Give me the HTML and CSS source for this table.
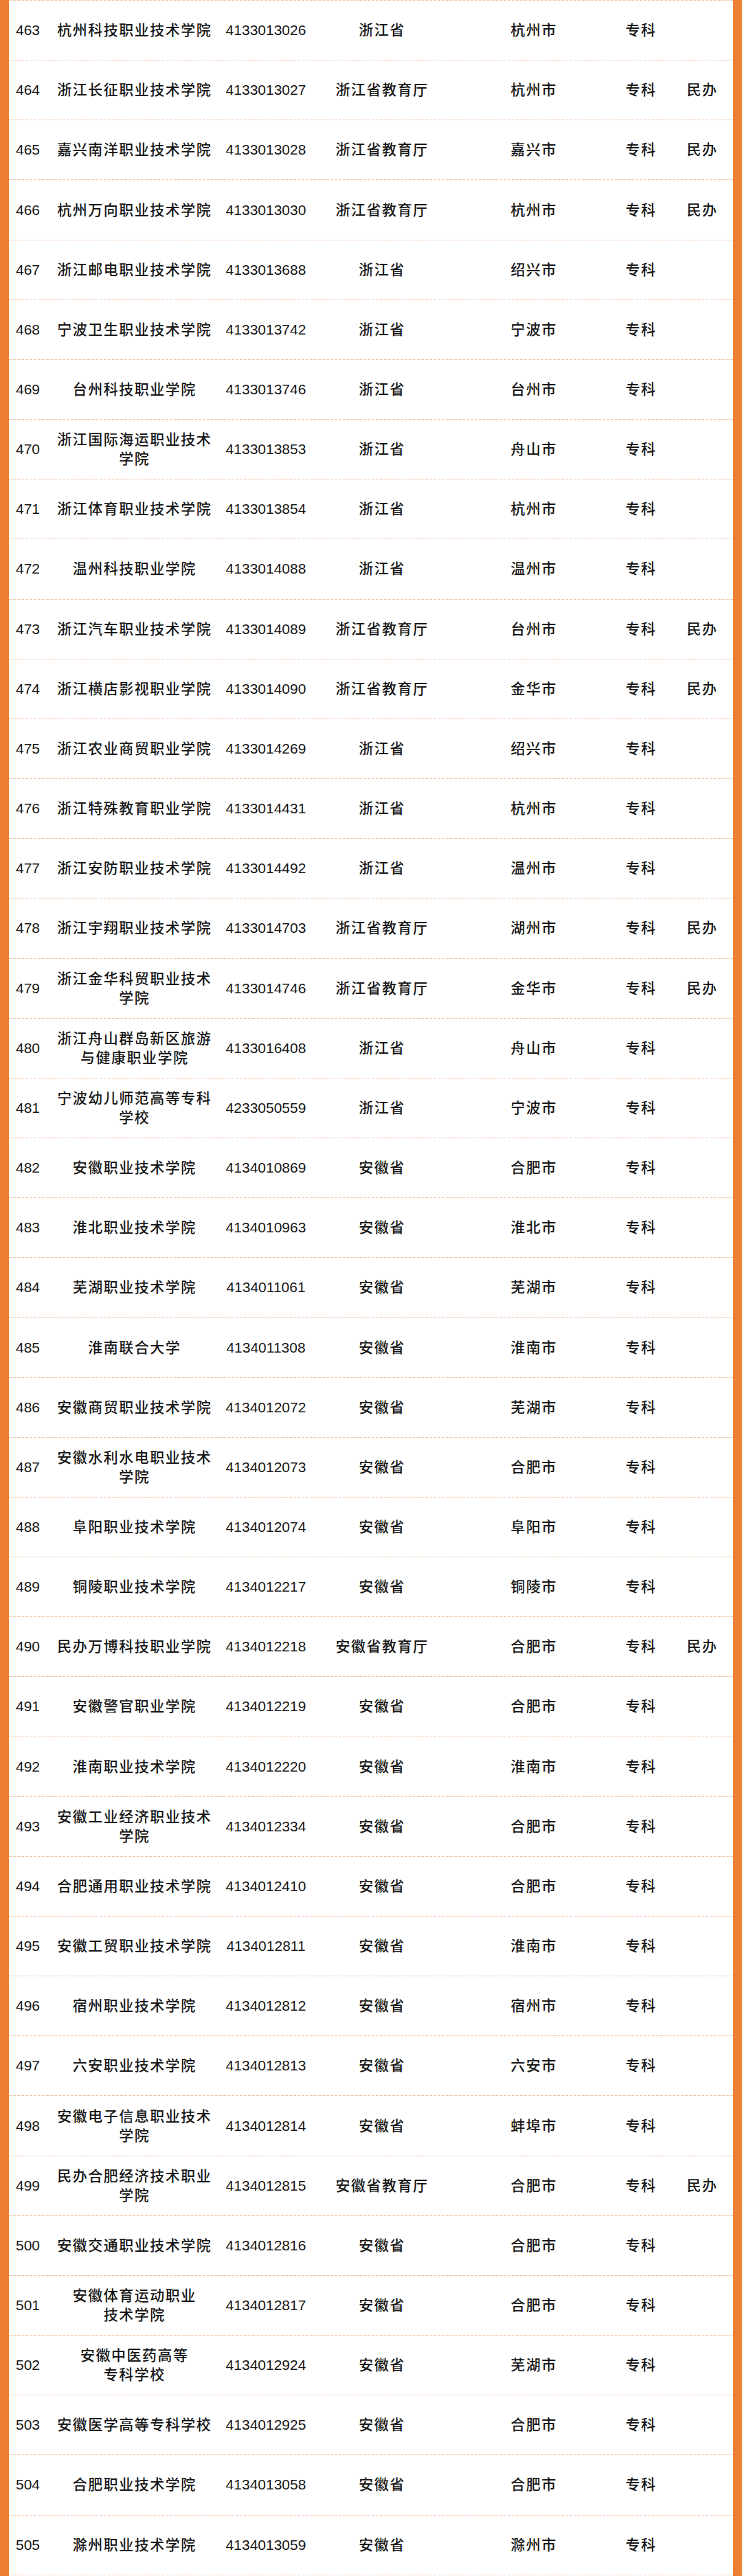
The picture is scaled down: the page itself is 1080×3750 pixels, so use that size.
FILE: index.html
```html
<!DOCTYPE html>
<html lang="zh-CN">
<head>
<meta charset="utf-8">
<title>院校名单</title>
<link rel="stylesheet" href="styles.css">
</head>
<body>
<div class="sheet">
  <div class="row"><span class="no">463</span><span class="name">杭州科技职业技术学院</span><span class="code">4133013026</span><span class="prov">浙江省</span><span class="city">杭州市</span><span class="level">专科</span><span class="type"></span></div>
  <div class="row"><span class="no">464</span><span class="name">浙江长征职业技术学院</span><span class="code">4133013027</span><span class="prov">浙江省教育厅</span><span class="city">杭州市</span><span class="level">专科</span><span class="type">民办</span></div>
  <div class="row"><span class="no">465</span><span class="name">嘉兴南洋职业技术学院</span><span class="code">4133013028</span><span class="prov">浙江省教育厅</span><span class="city">嘉兴市</span><span class="level">专科</span><span class="type">民办</span></div>
  <div class="row"><span class="no">466</span><span class="name">杭州万向职业技术学院</span><span class="code">4133013030</span><span class="prov">浙江省教育厅</span><span class="city">杭州市</span><span class="level">专科</span><span class="type">民办</span></div>
  <div class="row"><span class="no">467</span><span class="name">浙江邮电职业技术学院</span><span class="code">4133013688</span><span class="prov">浙江省</span><span class="city">绍兴市</span><span class="level">专科</span><span class="type"></span></div>
  <div class="row"><span class="no">468</span><span class="name">宁波卫生职业技术学院</span><span class="code">4133013742</span><span class="prov">浙江省</span><span class="city">宁波市</span><span class="level">专科</span><span class="type"></span></div>
  <div class="row"><span class="no">469</span><span class="name">台州科技职业学院</span><span class="code">4133013746</span><span class="prov">浙江省</span><span class="city">台州市</span><span class="level">专科</span><span class="type"></span></div>
  <div class="row"><span class="no">470</span><span class="name">浙江国际海运职业技术<br>学院</span><span class="code">4133013853</span><span class="prov">浙江省</span><span class="city">舟山市</span><span class="level">专科</span><span class="type"></span></div>
  <div class="row"><span class="no">471</span><span class="name">浙江体育职业技术学院</span><span class="code">4133013854</span><span class="prov">浙江省</span><span class="city">杭州市</span><span class="level">专科</span><span class="type"></span></div>
  <div class="row"><span class="no">472</span><span class="name">温州科技职业学院</span><span class="code">4133014088</span><span class="prov">浙江省</span><span class="city">温州市</span><span class="level">专科</span><span class="type"></span></div>
  <div class="row"><span class="no">473</span><span class="name">浙江汽车职业技术学院</span><span class="code">4133014089</span><span class="prov">浙江省教育厅</span><span class="city">台州市</span><span class="level">专科</span><span class="type">民办</span></div>
  <div class="row"><span class="no">474</span><span class="name">浙江横店影视职业学院</span><span class="code">4133014090</span><span class="prov">浙江省教育厅</span><span class="city">金华市</span><span class="level">专科</span><span class="type">民办</span></div>
  <div class="row"><span class="no">475</span><span class="name">浙江农业商贸职业学院</span><span class="code">4133014269</span><span class="prov">浙江省</span><span class="city">绍兴市</span><span class="level">专科</span><span class="type"></span></div>
  <div class="row"><span class="no">476</span><span class="name">浙江特殊教育职业学院</span><span class="code">4133014431</span><span class="prov">浙江省</span><span class="city">杭州市</span><span class="level">专科</span><span class="type"></span></div>
  <div class="row"><span class="no">477</span><span class="name">浙江安防职业技术学院</span><span class="code">4133014492</span><span class="prov">浙江省</span><span class="city">温州市</span><span class="level">专科</span><span class="type"></span></div>
  <div class="row"><span class="no">478</span><span class="name">浙江宇翔职业技术学院</span><span class="code">4133014703</span><span class="prov">浙江省教育厅</span><span class="city">湖州市</span><span class="level">专科</span><span class="type">民办</span></div>
  <div class="row"><span class="no">479</span><span class="name">浙江金华科贸职业技术<br>学院</span><span class="code">4133014746</span><span class="prov">浙江省教育厅</span><span class="city">金华市</span><span class="level">专科</span><span class="type">民办</span></div>
  <div class="row"><span class="no">480</span><span class="name">浙江舟山群岛新区旅游<br>与健康职业学院</span><span class="code">4133016408</span><span class="prov">浙江省</span><span class="city">舟山市</span><span class="level">专科</span><span class="type"></span></div>
  <div class="row"><span class="no">481</span><span class="name">宁波幼儿师范高等专科<br>学校</span><span class="code">4233050559</span><span class="prov">浙江省</span><span class="city">宁波市</span><span class="level">专科</span><span class="type"></span></div>
  <div class="row"><span class="no">482</span><span class="name">安徽职业技术学院</span><span class="code">4134010869</span><span class="prov">安徽省</span><span class="city">合肥市</span><span class="level">专科</span><span class="type"></span></div>
  <div class="row"><span class="no">483</span><span class="name">淮北职业技术学院</span><span class="code">4134010963</span><span class="prov">安徽省</span><span class="city">淮北市</span><span class="level">专科</span><span class="type"></span></div>
  <div class="row"><span class="no">484</span><span class="name">芜湖职业技术学院</span><span class="code">4134011061</span><span class="prov">安徽省</span><span class="city">芜湖市</span><span class="level">专科</span><span class="type"></span></div>
  <div class="row"><span class="no">485</span><span class="name">淮南联合大学</span><span class="code">4134011308</span><span class="prov">安徽省</span><span class="city">淮南市</span><span class="level">专科</span><span class="type"></span></div>
  <div class="row"><span class="no">486</span><span class="name">安徽商贸职业技术学院</span><span class="code">4134012072</span><span class="prov">安徽省</span><span class="city">芜湖市</span><span class="level">专科</span><span class="type"></span></div>
  <div class="row"><span class="no">487</span><span class="name">安徽水利水电职业技术<br>学院</span><span class="code">4134012073</span><span class="prov">安徽省</span><span class="city">合肥市</span><span class="level">专科</span><span class="type"></span></div>
  <div class="row"><span class="no">488</span><span class="name">阜阳职业技术学院</span><span class="code">4134012074</span><span class="prov">安徽省</span><span class="city">阜阳市</span><span class="level">专科</span><span class="type"></span></div>
  <div class="row"><span class="no">489</span><span class="name">铜陵职业技术学院</span><span class="code">4134012217</span><span class="prov">安徽省</span><span class="city">铜陵市</span><span class="level">专科</span><span class="type"></span></div>
  <div class="row"><span class="no">490</span><span class="name">民办万博科技职业学院</span><span class="code">4134012218</span><span class="prov">安徽省教育厅</span><span class="city">合肥市</span><span class="level">专科</span><span class="type">民办</span></div>
  <div class="row"><span class="no">491</span><span class="name">安徽警官职业学院</span><span class="code">4134012219</span><span class="prov">安徽省</span><span class="city">合肥市</span><span class="level">专科</span><span class="type"></span></div>
  <div class="row"><span class="no">492</span><span class="name">淮南职业技术学院</span><span class="code">4134012220</span><span class="prov">安徽省</span><span class="city">淮南市</span><span class="level">专科</span><span class="type"></span></div>
  <div class="row"><span class="no">493</span><span class="name">安徽工业经济职业技术<br>学院</span><span class="code">4134012334</span><span class="prov">安徽省</span><span class="city">合肥市</span><span class="level">专科</span><span class="type"></span></div>
  <div class="row"><span class="no">494</span><span class="name">合肥通用职业技术学院</span><span class="code">4134012410</span><span class="prov">安徽省</span><span class="city">合肥市</span><span class="level">专科</span><span class="type"></span></div>
  <div class="row"><span class="no">495</span><span class="name">安徽工贸职业技术学院</span><span class="code">4134012811</span><span class="prov">安徽省</span><span class="city">淮南市</span><span class="level">专科</span><span class="type"></span></div>
  <div class="row"><span class="no">496</span><span class="name">宿州职业技术学院</span><span class="code">4134012812</span><span class="prov">安徽省</span><span class="city">宿州市</span><span class="level">专科</span><span class="type"></span></div>
  <div class="row"><span class="no">497</span><span class="name">六安职业技术学院</span><span class="code">4134012813</span><span class="prov">安徽省</span><span class="city">六安市</span><span class="level">专科</span><span class="type"></span></div>
  <div class="row"><span class="no">498</span><span class="name">安徽电子信息职业技术<br>学院</span><span class="code">4134012814</span><span class="prov">安徽省</span><span class="city">蚌埠市</span><span class="level">专科</span><span class="type"></span></div>
  <div class="row"><span class="no">499</span><span class="name">民办合肥经济技术职业<br>学院</span><span class="code">4134012815</span><span class="prov">安徽省教育厅</span><span class="city">合肥市</span><span class="level">专科</span><span class="type">民办</span></div>
  <div class="row"><span class="no">500</span><span class="name">安徽交通职业技术学院</span><span class="code">4134012816</span><span class="prov">安徽省</span><span class="city">合肥市</span><span class="level">专科</span><span class="type"></span></div>
  <div class="row"><span class="no">501</span><span class="name">安徽体育运动职业<br>技术学院</span><span class="code">4134012817</span><span class="prov">安徽省</span><span class="city">合肥市</span><span class="level">专科</span><span class="type"></span></div>
  <div class="row"><span class="no">502</span><span class="name">安徽中医药高等<br>专科学校</span><span class="code">4134012924</span><span class="prov">安徽省</span><span class="city">芜湖市</span><span class="level">专科</span><span class="type"></span></div>
  <div class="row"><span class="no">503</span><span class="name">安徽医学高等专科学校</span><span class="code">4134012925</span><span class="prov">安徽省</span><span class="city">合肥市</span><span class="level">专科</span><span class="type"></span></div>
  <div class="row"><span class="no">504</span><span class="name">合肥职业技术学院</span><span class="code">4134013058</span><span class="prov">安徽省</span><span class="city">合肥市</span><span class="level">专科</span><span class="type"></span></div>
  <div class="row"><span class="no">505</span><span class="name">滁州职业技术学院</span><span class="code">4134013059</span><span class="prov">安徽省</span><span class="city">滁州市</span><span class="level">专科</span><span class="type"></span></div>
</div>
</body>
</html>
```
FILE: styles.css
```css
html, body {
  margin: 0;
  padding: 0;
  background: #ffffff;
}

body {
  font-family: "Liberation Sans", "Noto Sans CJK SC", sans-serif;
  color: #161616;
}

.sheet {
  width: 1080px;
  min-height: 3750px;
  box-sizing: border-box;
  border-left: 13px solid #ec7f34;
  border-right: 13px solid #ec7f34;
  background-color: #ffffff;
  background-image: repeating-linear-gradient(90deg, #f2c4a6 0 4px, transparent 4px 6px);
  background-size: 100% 1px;
  background-repeat: no-repeat;
  background-position: left top;
  padding-top: 1px;
}

.row {
  display: grid;
  grid-template-columns: 62px 240px 144px 194px 248px 64px 102px;
  align-items: center;
  height: 87.16px;
  box-sizing: border-box;
  padding-bottom: 1px;
  background-image: repeating-linear-gradient(90deg, #f2c4a6 0 4px, transparent 4px 6px);
  background-size: 100% 1px;
  background-repeat: no-repeat;
  background-position: left bottom;
  font-size: 21px;
  line-height: 28px;
  white-space: nowrap;
}

.no {
  padding-left: 10px;
  font-weight: 500;
}

.name,
.prov,
.city,
.level,
.type {
  text-align: center;
  letter-spacing: 1.5px;
  font-weight: 500;
}

.name {
  padding-left: 1.5px;
}

.code {
  text-align: center;
  font-weight: 500;
}

.type {
  padding-left: 12px;
}
```
